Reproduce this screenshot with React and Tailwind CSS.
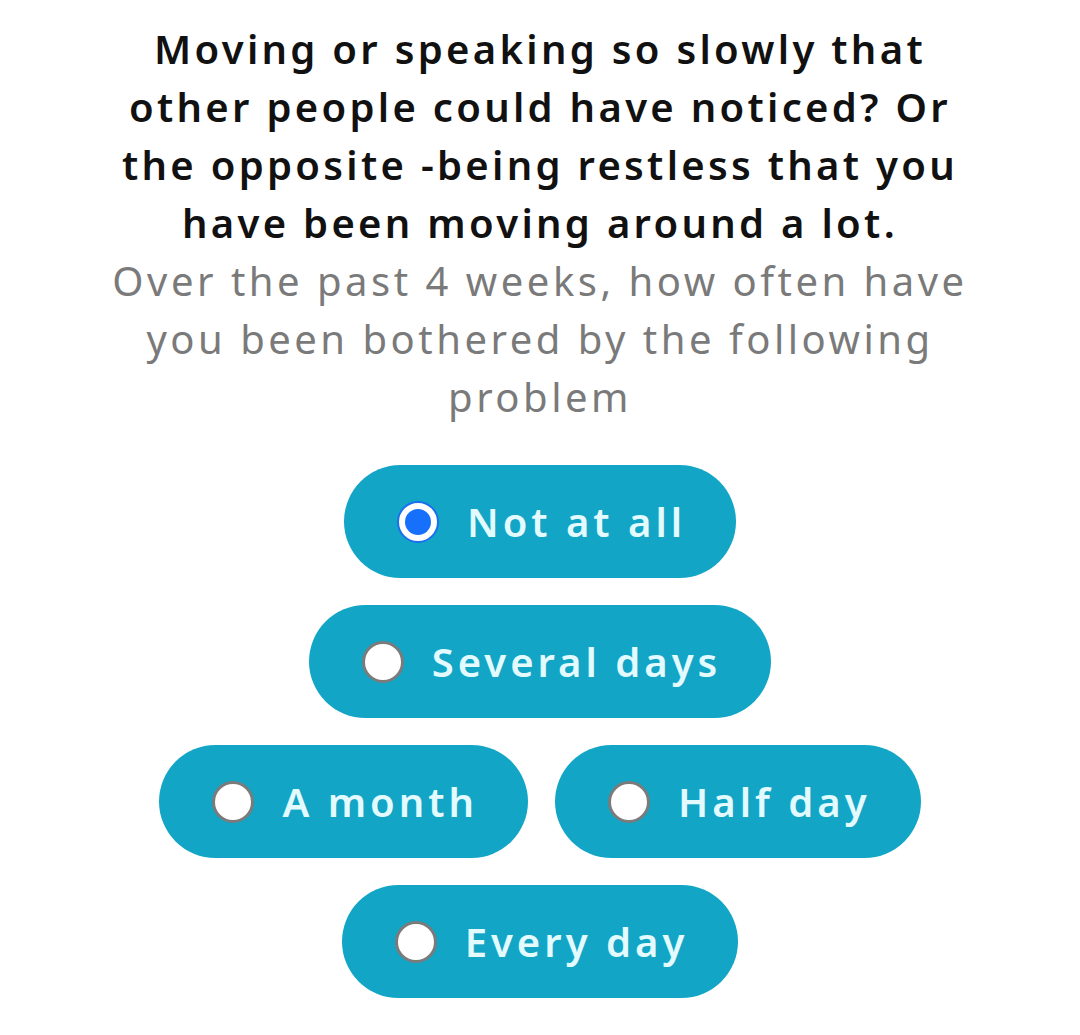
import React, { useState } from 'react';

const options = [['Not at all'], ['Several days'], ['A month', 'Half day'], ['Every day']];

const Option = ({ label, selected, onSelect }) => (
  <button
    type="button"
    onClick={onSelect}
    className="flex items-center h-[113px] pl-[53px] pr-[50px] gap-[28px] rounded-full bg-[#12a5c6] text-[#e3fbff] text-[40px] font-semibold tracking-[4px]"
  >
    {selected ? (
      <span className="w-[42px] h-[42px] rounded-full bg-white border-2 border-[#1a6ff0] flex items-center justify-center">
        <span className="w-[26px] h-[26px] rounded-full bg-[#1670fb]" />
      </span>
    ) : (
      <span className="w-[42px] h-[42px] rounded-full bg-white border-[3px] border-[#7b7b7b]" />
    )}
    <span>{label}</span>
  </button>
);

export default function App() {
  const [value, setValue] = useState('Not at all');

  return (
    <div className="w-[1080px] min-h-[1035px] bg-white flex flex-col items-center pt-[20px] font-['Noto_Sans',sans-serif]">
      <h2 className="text-center text-[40px] leading-[58px] font-semibold tracking-[3.3px] text-[#111]">
        Moving or speaking so slowly that<br />
        other people could have noticed? Or<br />
        the opposite -being restless that you<br />
        have been moving around a lot.
      </h2>
      <p className="text-center text-[40px] leading-[58px] tracking-[3.5px] text-[#7a7a7a]">
        Over the past 4 weeks, how often have<br />
        you been bothered by the following<br />
        problem
      </p>
      <div className="mt-[39px] flex flex-col items-center gap-[27px]">
        {options.map((row, i) => (
          <div key={i} className="flex gap-[27px]">
            {row.map((label) => (
              <Option key={label} label={label} selected={value === label} onSelect={() => setValue(label)} />
            ))}
          </div>
        ))}
      </div>
    </div>
  );
}
